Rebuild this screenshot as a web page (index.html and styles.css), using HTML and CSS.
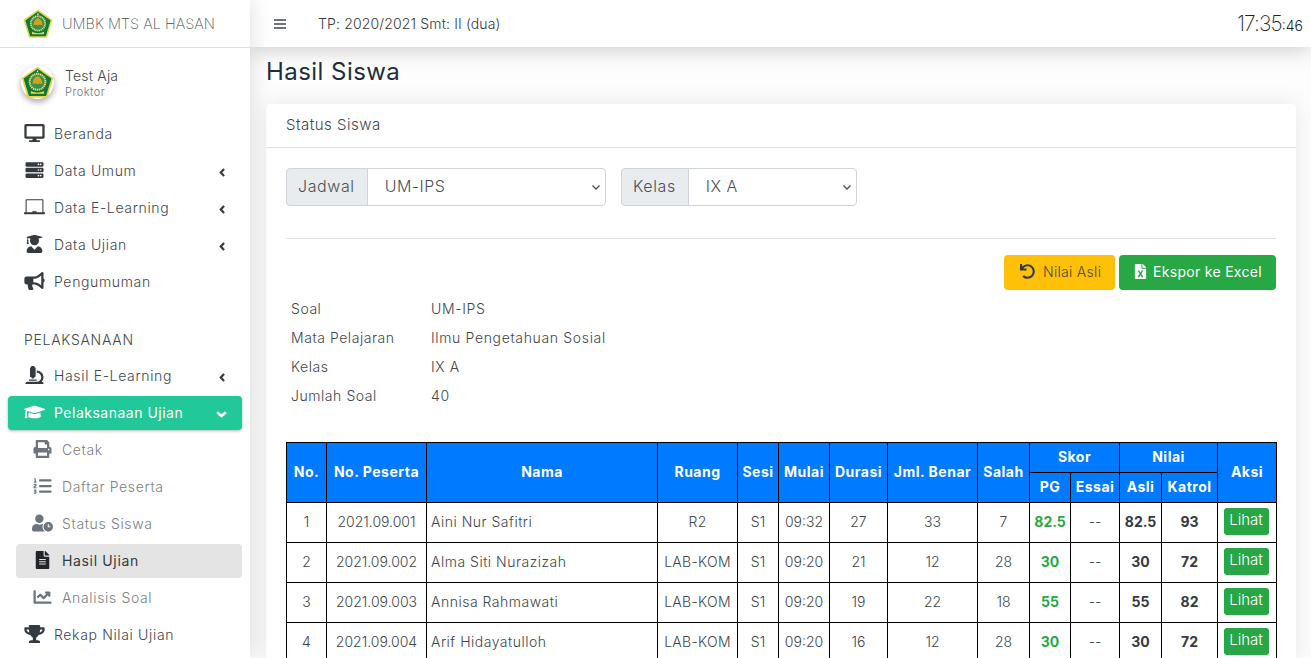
FILE: index.html
```html
<!DOCTYPE html>
<html lang="id">
<head>
<meta charset="utf-8">
<title>Hasil Siswa</title>
<link rel="stylesheet" href="styles.css">
</head>
<body>
<svg class="defs" width="0" height="0">
  <symbol id="logo" viewBox="0 0 100 100">
    <path d="M50 2 98 36 80 96H20L2 36Z" fill="#e8d44a"/>
    <path d="M50 8 92 38 76 91H24L8 38Z" fill="#0f7a35"/>
    <circle cx="50" cy="48" r="24" fill="#3d8f45" stroke="#e3dc8a" stroke-width="6" stroke-dasharray="4 2"/>
    <path d="M50 30c10 4 15 13 15 25-6-3-11-3-15 0-4-3-9-3-15 0 0-12 5-21 15-25Z" fill="#d1a21f"/>
    <path d="M30 76c12 6 28 6 40 0v8H30Z" fill="#e8d44a"/>
    <path d="M50 12l3 7h-6Z" fill="#fff"/>
  </symbol>
  <symbol id="i-desktop" viewBox="0 0 576 512"><path d="M528 0H48C21.500 0 0 21.500 0 48v320c0 26.500 21.500 48 48 48h192l-16 48h-72c-13.300 0-24 10.700-24 24s10.700 24 24 24h272c13.300 0 24-10.700 24-24s-10.700-24-24-24h-72l-16-48h192c26.500 0 48-21.500 48-48V48c0-26.500-21.500-48-48-48zm-16 352H64V64h448v288z"/></symbol>
  <symbol id="i-server" viewBox="0 0 512 512"><path d="M480 160H32c-17.673 0-32-14.327-32-32V64c0-17.673 14.327-32 32-32h448c17.673 0 32 14.327 32 32v64c0 17.673-14.327 32-32 32zm-48-88c-13.255 0-24 10.745-24 24s10.745 24 24 24 24-10.745 24-24-10.745-24-24-24zm-64 0c-13.255 0-24 10.745-24 24s10.745 24 24 24 24-10.745 24-24-10.745-24-24-24zm112 248H32c-17.673 0-32-14.327-32-32v-64c0-17.673 14.327-32 32-32h448c17.673 0 32 14.327 32 32v64c0 17.673-14.327 32-32 32zm-48-88c-13.255 0-24 10.745-24 24s10.745 24 24 24 24-10.745 24-24-10.745-24-24-24zm-64 0c-13.255 0-24 10.745-24 24s10.745 24 24 24 24-10.745 24-24-10.745-24-24-24zm112 248H32c-17.673 0-32-14.327-32-32v-64c0-17.673 14.327-32 32-32h448c17.673 0 32 14.327 32 32v64c0 17.673-14.327 32-32 32zm-48-88c-13.255 0-24 10.745-24 24s10.745 24 24 24 24-10.745 24-24-10.745-24-24-24zm-64 0c-13.255 0-24 10.745-24 24s10.745 24 24 24 24-10.745 24-24-10.745-24-24-24z"/></symbol>
  <symbol id="i-laptop" viewBox="0 0 640 512"><path fill-rule="evenodd" d="M80 16h480c18 0 32 14 32 32v368h48v32c0 18-14 32-32 32H32c-18 0-32-14-32-32v-32h48V48c0-18 14-32 32-32Zm0 32v368h176v-32h128v32h176V48Z"/></symbol>
  <symbol id="i-grad" viewBox="0 0 448 512"><path d="M319.400 320.600L224 416l-95.400-95.400C57.100 323.700 0 382.200 0 454.400v9.600c0 26.500 21.500 48 48 48h352c26.500 0 48-21.500 48-48v-9.600c0-72.200-57.100-130.700-128.600-133.800zM13.600 79.800l6.400 1.500v58.400c-7 4.200-12 11.500-12 20.300 0 8.400 4.600 15.400 11.100 19.700L3.500 242c-1.700 6.900 2.100 14 7.600 14h41.800c5.500 0 9.300-7.100 7.600-14l-15.600-62.300C51.400 175.400 56 168.400 56 160c0-8.800-5-16.100-12-20.300V87.100l66 15.900c-8.600 17.200-14 36.400-14 57 0 70.700 57.300 128 128 128s128-57.300 128-128c0-20.600-5.300-39.800-14-57l96.300-23.200c18.200-4.400 18.200-27.100 0-31.500l-190.400-46c-13-3.100-26.700-3.100-39.700 0L13.600 48.200c-18.100 4.400-18.100 27.200 0 31.600z"/></symbol>
  <symbol id="i-horn" viewBox="0 0 576 512"><path d="M576 240c0-23.630-12.950-44.040-32-55.120V32.010C544 23.260 537.020 0 512 0c-7.120 0-14.190 2.380-19.980 7.020l-85.030 68.030C364.280 109.190 310.660 128 256 128H64c-35.350 0-64 28.650-64 64v96c0 35.350 28.650 64 64 64h33.700c-1.390 10.480-2.180 21.140-2.180 32 0 39.770 9.260 77.350 25.560 110.940 5.190 10.690 16.520 17.060 28.400 17.060h74.280c26.050 0 41.690-29.840 25.900-50.560-16.400-21.520-26.150-48.360-26.150-77.440 0-11.110 1.620-21.790 4.410-32H256c54.660 0 108.280 18.810 150.980 52.950l85.030 68.030a32.023 32.023 0 0 0 19.980 7.020c24.920 0 32-22.780 32-32V295.130C563.050 284.040 576 263.630 576 240zm-96 141.420l-33.050-26.440C392.950 311.780 325.120 288 256 288v-96c69.120 0 136.950-23.780 190.950-66.980L480 98.580v282.840z"/></symbol>
  <symbol id="i-micro" viewBox="0 0 512 512"><path d="M160 320h12v16c0 8.840 7.160 16 16 16h40c8.840 0 16-7.160 16-16v-16h12c17.670 0 32-14.330 32-32V64c0-17.670-14.330-32-32-32V16c0-8.840-7.160-16-16-16h-64c-8.840 0-16 7.160-16 16v16c-17.670 0-32 14.330-32 32v224c0 17.670 14.330 32 32 32zm304 128h-1.290C493.240 413.990 512 369.650 512 320c0-105.880-86.120-192-192-192v64c70.580 0 128 57.420 128 128s-57.420 128-128 128H48c-26.510 0-48 21.490-48 48 0 8.840 7.160 16 16 16h480c8.840 0 16-7.160 16-16 0-26.510-21.490-48-48-48zm-360-32h208c4.420 0 8-3.580 8-8v-16c0-4.420-3.580-8-8-8H104c-4.420 0-8 3.580-8 8v16c0 4.420 3.580 8 8 8z"/></symbol>
  <symbol id="i-cap" viewBox="0 0 640 512"><path d="M622.340 153.200L343.400 67.500c-15.200-4.670-31.600-4.670-46.790 0L17.660 153.200c-23.540 7.230-23.540 38.360 0 45.590l48.630 14.940c-10.670 13.190-17.230 29.280-17.880 46.900C38.780 266.150 32 276.110 32 288c0 10.780 5.680 19.850 13.860 25.650L20.330 428.530C18.110 438.520 25.710 448 35.940 448h56.110c10.240 0 17.840-9.480 15.620-19.470L82.140 313.650C90.320 307.850 96 298.780 96 288c0-11.570-6.470-21.250-15.660-26.870.76-15.020 8.440-28.300 20.690-36.720L296.600 284.500c9.060 2.780 26.440 6.250 46.790 0l278.950-85.700c23.550-7.240 23.550-38.360 0-45.600zM352.790 315.090c-28.530 8.760-52.840 3.920-65.590 0l-145.020-44.550L128 384c0 35.350 85.960 64 192 64s192-28.650 192-64l-14.180-113.470-145.030 44.560z"/></symbol>
  <symbol id="i-print" viewBox="0 0 512 512"><path d="M448 192V77.250c0-8.490-3.370-16.620-9.370-22.630L393.370 9.370c-6-6-14.140-9.370-22.630-9.370H96C78.330 0 64 14.330 64 32v160c-35.350 0-64 28.650-64 64v112c0 8.840 7.160 16 16 16h48v96c0 17.670 14.330 32 32 32h320c17.670 0 32-14.330 32-32v-96h48c8.840 0 16-7.160 16-16V256c0-35.350-28.650-64-64-64zm-64 256H128v-96h256v96zm0-224H128V64h192v48c0 8.840 7.160 16 16 16h48v96zm48 72c-13.250 0-24-10.750-24-24 0-13.260 10.750-24 24-24s24 10.740 24 24c0 13.250-10.750 24-24 24z"/></symbol>
  <symbol id="i-list" viewBox="0 0 512 512"><path d="M61.770 401l17.500-20.150a19.920 19.920 0 0 0 5.070-14.190v-3.310C84.340 356 80.500 352 73 352H16a8 8 0 0 0-8 8v16a8 8 0 0 0 8 8h22.830a157.410 157.410 0 0 0-11 12.310l-5.610 7c-4 5.070-5.250 10.130-2.800 14.880l1.050 1.930c3 5.760 6.290 7.880 12.250 7.880h4.730c10.330 0 15.940 2.440 15.940 9.090 0 4.720-4.200 8.220-14.360 8.220a41.540 41.540 0 0 1-15.470-3.120c-6.490-3.880-11.740-3.500-15.600 3.120l-5.590 9.310c-3.720 6.130-3.190 11.720 2.630 15.940 7.710 4.690 20.380 9.440 37 9.440 34.160 0 48.500-22.750 48.500-44.120-.03-14.380-9.120-29.760-28.730-34.880zM496 224H176a16 16 0 0 0-16 16v32a16 16 0 0 0 16 16h320a16 16 0 0 0 16-16v-32a16 16 0 0 0-16-16zm0-160H176a16 16 0 0 0-16 16v32a16 16 0 0 0 16 16h320a16 16 0 0 0 16-16V80a16 16 0 0 0-16-16zm0 320H176a16 16 0 0 0-16 16v32a16 16 0 0 0 16 16h320a16 16 0 0 0 16-16v-32a16 16 0 0 0-16-16zM16 160h64a8 8 0 0 0 8-8v-16a8 8 0 0 0-8-8H64V40a8 8 0 0 0-8-8H32a8 8 0 0 0-7.140 4.420l-8 16A8 8 0 0 0 24 64h8v64H16a8 8 0 0 0-8 8v16a8 8 0 0 0 8 8zm-3.910 160H80a8 8 0 0 0 8-8v-16a8 8 0 0 0-8-8H41.320c3.290-10.290 48.340-18.680 48.340-56.440 0-29.060-25-39.560-44.470-39.560-21.360 0-33.800 10-40.460 18.750-4.370 5.590-3 10.840 2.800 15.370l8.580 6.880c5.610 4.560 11 2.470 16.120-2.440a13.440 13.440 0 0 1 9.460-3.840c3.330 0 9.280 1.560 9.280 8.750C51 248.190 0 257.310 0 304.590v4C0 316 5.080 320 12.090 320z"/></symbol>
  <symbol id="i-userclock" viewBox="0 0 640 512"><path d="M224 256A128 128 0 1 0 224 0a128 128 0 0 0 0 256zM320 368c0-27.800 6.700-54 18.500-77.100-3.100-.3-6.100-.9-9.300-.9h-16.700c-22.200 10.200-46.900 16-72.500 16s-50.200-5.800-72.500-16h-16.700C60.200 288 0 348.200 0 422.400V464c0 26.500 21.500 48 48 48h347.100c-45.300-31.900-75.100-84.500-75.100-144zM496 224c-79.590 0-144 64.410-144 144s64.410 144 144 144 144-64.410 144-144-64.410-144-144-144zm64 150.290c0 5.340-4.370 9.710-9.710 9.710h-60.570c-5.340 0-9.710-4.370-9.710-9.710v-76.570c0-5.340 4.370-9.710 9.710-9.710h12.570c5.340 0 9.710 4.370 9.710 9.710V352h38.290c5.340 0 9.710 4.370 9.710 9.710v12.580z"/></symbol>
  <symbol id="i-file" viewBox="0 0 384 512"><path d="M224 136V0H24C10.700 0 0 10.700 0 24v464c0 13.300 10.700 24 24 24h336c13.300 0 24-10.700 24-24V160H248c-13.200 0-24-10.800-24-24zm64 236c0 6.600-5.400 12-12 12H108c-6.600 0-12-5.400-12-12v-8c0-6.600 5.400-12 12-12h168c6.600 0 12 5.400 12 12v8zm0-64c0 6.600-5.400 12-12 12H108c-6.600 0-12-5.400-12-12v-8c0-6.600 5.400-12 12-12h168c6.600 0 12 5.400 12 12v8zm0-72v8c0 6.600-5.400 12-12 12H108c-6.600 0-12-5.400-12-12v-8c0-6.600 5.400-12 12-12h168c6.600 0 12 5.400 12 12zm96-114.100v6.100H256V0h6.100c6.400 0 12.500 2.500 17 7l97.900 98c4.500 4.500 7 10.600 7 16.900z"/></symbol>
  <symbol id="i-chart" viewBox="0 0 512 512"><path d="M496 384H64V80c0-8.840-7.160-16-16-16H16C7.160 64 0 71.160 0 80v336c0 17.670 14.330 32 32 32h464c8.840 0 16-7.160 16-16v-32c0-8.840-7.160-16-16-16zM464 96H345.940c-21.380 0-32.090 25.850-16.970 40.970l32.400 32.400L288 242.750l-73.370-73.370c-12.500-12.500-32.760-12.500-45.250 0l-68.690 68.690c-6.250 6.250-6.250 16.380 0 22.630l22.620 22.620c6.250 6.250 16.380 6.250 22.630 0L192 237.250l73.370 73.370c12.500 12.500 32.760 12.500 45.250 0l96-96 32.400 32.400c15.120 15.120 40.970 4.410 40.970-16.970V112c.01-8.840-7.150-16-15.990-16z"/></symbol>
  <symbol id="i-trophy" viewBox="0 0 576 512"><path d="M552 64H448V24c0-13.300-10.700-24-24-24H152c-13.300 0-24 10.700-24 24v40H24C10.700 64 0 74.700 0 88v56c0 35.700 22.500 72.400 61.900 100.700 31.500 22.700 69.800 37.100 110 41.700C203.300 338.500 240 360 240 360v72h-48c-35.300 0-64 20.700-64 56v12c0 6.600 5.400 12 12 12h296c6.600 0 12-5.400 12-12v-12c0-35.300-28.700-56-64-56h-48v-72s36.700-21.500 68.100-73.600c40.300-4.600 78.600-19 110-41.700 39.300-28.300 61.900-65 61.900-100.700V88c0-13.300-10.700-24-24-24zM99.300 192.800C74.900 175.200 64 155.600 64 144v-16h64.200c1 32.600 5.800 61.200 12.800 86.200-15.100-5.200-29.200-12.400-41.700-21.400zM512 144c0 16.100-17.700 36.100-35.300 48.800-12.500 9-26.700 16.200-41.800 21.400 7-25 11.800-53.600 12.800-86.200H512v16z"/></symbol>
  <symbol id="i-undo" viewBox="0 0 512 512"><path d="M212.333 224.333H12c-6.627 0-12-5.373-12-12V12C0 5.373 5.373 0 12 0h48c6.627 0 12 5.373 12 12v78.112C117.773 39.279 184.260 7.470 258.175 8.007c136.906.994 246.448 111.623 246.157 248.532C504.041 393.258 393.120 504 256.333 504c-64.089 0-122.496-24.313-166.510-64.215-5.099-4.622-5.334-12.554-.467-17.420l33.967-33.967c4.474-4.474 11.662-4.717 16.401-.525C170.760 415.336 211.580 432 256.333 432c97.268 0 176-78.716 176-176 0-97.267-78.716-176-176-176-58.496 0-110.280 28.476-142.274 72.333h98.274c6.627 0 12 5.373 12 12v48c0 6.627-5.373 12-12 12z"/></symbol>
  <symbol id="i-excel" viewBox="0 0 384 512"><path d="M224 136V0H24C10.700 0 0 10.700 0 24v464c0 13.300 10.700 24 24 24h336c13.300 0 24-10.700 24-24V160H248c-13.200 0-24-10.800-24-24zm60.100 106.500L224 336l60.100 93.500c5.100 8-.6 18.500-10.100 18.500h-34.900c-4.400 0-8.500-2.400-10.600-6.300C208.900 405.500 192 373 192 373c-6.400 14.800-10 20-36.600 68.800-2.100 3.900-6.100 6.300-10.500 6.300H110c-9.500 0-15.200-10.500-10.100-18.500l60.300-93.500-60.300-93.500c-5.200-8 .6-18.500 10.100-18.500h34.800c4.400 0 8.500 2.400 10.600 6.300 26.100 48.800 20 33.600 36.600 68.500 0 0 6.100-11.700 36.600-68.500 2.100-3.900 6.200-6.300 10.600-6.300H274c9.500-.1 15.200 10.400 10.100 18.400zM384 121.900v6.100H256V0h6.100c6.400 0 12.500 2.500 17 7l97.900 98c4.500 4.500 7 10.600 7 16.900z"/></symbol>
  <symbol id="i-left" viewBox="0 0 8 10"><path d="M5.800 1 2 5l3.800 4" fill="none" stroke="currentColor" stroke-width="2.500"/></symbol>
  <symbol id="i-down" viewBox="0 0 11 7"><path d="M1.200 1.200 5.500 5l4.300-3.800" fill="none" stroke="currentColor" stroke-width="2.500"/></symbol>
</svg>

<aside class="sidebar">
  <div class="brand">
    <svg class="brand-logo"><use href="#logo"/></svg>
    <span class="brand-text">UMBK MTS AL HASAN</span>
  </div>
  <div class="user">
    <span class="avatar"><svg class="avatar-logo"><use href="#logo"/></svg></span>
    <div class="user-info">
      <div class="user-name">Test Aja</div>
      <div class="user-role">Proktor</div>
    </div>
  </div>
  <nav class="menu">
    <a class="item"><svg class="ico"><use href="#i-desktop"/></svg>Beranda</a>
    <a class="item"><svg class="ico"><use href="#i-server"/></svg>Data Umum<svg class="arrow"><use href="#i-left"/></svg></a>
    <a class="item"><svg class="ico"><use href="#i-laptop"/></svg>Data E-Learning<svg class="arrow"><use href="#i-left"/></svg></a>
    <a class="item"><svg class="ico"><use href="#i-grad"/></svg>Data Ujian<svg class="arrow"><use href="#i-left"/></svg></a>
    <a class="item"><svg class="ico"><use href="#i-horn"/></svg>Pengumuman</a>
    <div class="menu-head">PELAKSANAAN</div>
    <a class="item"><svg class="ico"><use href="#i-micro"/></svg>Hasil E-Learning<svg class="arrow"><use href="#i-left"/></svg></a>
    <a class="item active"><svg class="ico"><use href="#i-cap"/></svg>Pelaksanaan Ujian<svg class="arrow-down"><use href="#i-down"/></svg></a>
    <a class="item sub"><svg class="ico"><use href="#i-print"/></svg>Cetak</a>
    <a class="item sub"><svg class="ico"><use href="#i-list"/></svg>Daftar Peserta</a>
    <a class="item sub"><svg class="ico"><use href="#i-userclock"/></svg>Status Siswa</a>
    <a class="item sub current"><svg class="ico"><use href="#i-file"/></svg>Hasil Ujian</a>
    <a class="item sub"><svg class="ico"><use href="#i-chart"/></svg>Analisis Soal</a>
    <a class="item"><svg class="ico"><use href="#i-trophy"/></svg>Rekap Nilai Ujian</a>
  </nav>
</aside>

<div class="page">
  <header class="topbar">
    <span class="bars"><i></i><i></i><i></i></span>
    <span class="period">TP: 2020/2021 Smt: II (dua)</span>
    <span class="clock">17:35<small>:46</small></span>
  </header>

  <main class="content">
    <h1 class="title">Hasil Siswa</h1>
    <section class="card">
      <div class="card-head">Status Siswa</div>
      <div class="card-body">
        <div class="filters">
          <div class="group group-jadwal">
            <span class="group-label">Jadwal</span>
            <select class="group-select"><option>UM-IPS</option></select>
          </div>
          <div class="group group-kelas">
            <span class="group-label">Kelas</span>
            <select class="group-select"><option>IX A</option></select>
          </div>
        </div>
        <hr class="rule">
        <div class="actions">
          <button class="btn btn-yellow"><svg class="btn-ico"><use href="#i-undo"/></svg>Nilai Asli</button>
          <button class="btn btn-green"><svg class="btn-ico"><use href="#i-excel"/></svg>Ekspor ke Excel</button>
        </div>
        <dl class="info">
          <dt>Soal</dt><dd>UM-IPS</dd>
          <dt>Mata Pelajaran</dt><dd>Ilmu Pengetahuan Sosial</dd>
          <dt>Kelas</dt><dd>IX A</dd>
          <dt>Jumlah Soal</dt><dd>40</dd>
        </dl>
        <table class="result">
          <colgroup>
            <col class="c-no"><col class="c-peserta"><col class="c-nama"><col class="c-ruang"><col class="c-sesi">
            <col class="c-mulai"><col class="c-durasi"><col class="c-benar"><col class="c-salah"><col class="c-pg">
            <col class="c-essai"><col class="c-asli"><col class="c-katrol"><col class="c-aksi">
          </colgroup>
          <thead>
            <tr>
              <th rowspan="2">No.</th><th rowspan="2">No. Peserta</th><th rowspan="2">Nama</th><th rowspan="2">Ruang</th>
              <th rowspan="2">Sesi</th><th rowspan="2">Mulai</th><th rowspan="2">Durasi</th><th rowspan="2">Jml. Benar</th>
              <th rowspan="2">Salah</th><th colspan="2">Skor</th><th colspan="2">Nilai</th><th rowspan="2">Aksi</th>
            </tr>
            <tr><th>PG</th><th>Essai</th><th>Asli</th><th>Katrol</th></tr>
          </thead>
          <tbody>
            <tr><td>1</td><td>2021.09.001</td><td class="name">Aini Nur Safitri</td><td class="room">R2</td><td>S1</td><td>09:32</td><td>27</td><td>33</td><td>7</td><td class="pg">82.5</td><td>--</td><td class="num">82.5</td><td class="num">93</td><td><button class="lihat">Lihat</button></td></tr>
            <tr><td>2</td><td>2021.09.002</td><td class="name">Alma Siti Nurazizah</td><td class="room">LAB-KOM</td><td>S1</td><td>09:20</td><td>21</td><td>12</td><td>28</td><td class="pg">30</td><td>--</td><td class="num">30</td><td class="num">72</td><td><button class="lihat">Lihat</button></td></tr>
            <tr><td>3</td><td>2021.09.003</td><td class="name">Annisa Rahmawati</td><td class="room">LAB-KOM</td><td>S1</td><td>09:20</td><td>19</td><td>22</td><td>18</td><td class="pg">55</td><td>--</td><td class="num">55</td><td class="num">82</td><td><button class="lihat">Lihat</button></td></tr>
            <tr><td>4</td><td>2021.09.004</td><td class="name">Arif Hidayatulloh</td><td class="room">LAB-KOM</td><td>S1</td><td>09:20</td><td>16</td><td>12</td><td>28</td><td class="pg">30</td><td>--</td><td class="num">30</td><td class="num">72</td><td><button class="lihat">Lihat</button></td></tr>
          </tbody>
        </table>
      </div>
    </section>
  </main>
</div>
</body>
</html>
```

FILE: styles.css
```css
* {
    box-sizing: border-box;
}

body {
    margin: 0;
    height: 658px;
    overflow: hidden;
    display: flex;
    background: #fdfdfd;
    font-family: Inter, "Liberation Sans", sans-serif;
    font-size: 14px;
    font-weight: 300;
    color: #41474d;
}

.defs {
    position: absolute;
}

/* sidebar */
.sidebar {
    width: 250px;
    flex: none;
    background: #fff;
    box-shadow: 0 0 22px rgba(0, 0, 0, .14);
    position: relative;
    z-index: 2;
}

.brand {
    height: 48px;
    display: flex;
    align-items: center;
    padding-left: 23px;
    border-bottom: 1px solid #dee2e6;
}

.brand-logo {
    width: 30px;
    height: 30px;
    margin-right: 9px;
}

.brand-text {
    font-size: 14.5px;
    font-weight: 200;
    color: #495057;
}

.user {
    height: 69px;
    display: flex;
    align-items: center;
    padding-left: 21px;
}

.avatar {
    width: 33px;
    height: 33px;
    border-radius: 50%;
    background: #fff;
    box-shadow: 0 3px 6px rgba(0, 0, 0, .35);
    margin-right: 11px;
    display: flex;
    align-items: center;
    justify-content: center;
}

.avatar-logo {
    width: 33px;
    height: 33px;
}

.user-info {
    padding-top: 2px;
}

.user-name {
    font-size: 14px;
    line-height: 16px;
    letter-spacing: .2px;
}

.user-role {
    margin-top: 2px;
    font-size: 11px;
    line-height: 13px;
    letter-spacing: .5px;
    color: #6c757d;
}

.menu {
    display: flex;
    flex-direction: column;
    gap: 3px;
    padding: 0 8px;
}

.item {
    height: 34px;
    display: flex;
    align-items: center;
    gap: 9px;
    padding: 0 16px 2px;
    border-radius: 4px;
    font-size: 14px;
    letter-spacing: .65px;
    color: #41474d;
}

.ico {
    width: 21px;
    height: 18px;
    flex: none;
    fill: #343a40;
}

.arrow {
    width: 7px;
    height: 9px;
    margin: 5px 0 0 auto;
    color: #343a40;
}

.arrow-down {
    width: 11px;
    height: 7px;
    margin: 4px -1px 0 auto;
    color: #fff;
}

.menu-head {
    height: 54px;
    padding: 28px 0 0 16px;
    font-size: 14px;
    line-height: 20px;
    letter-spacing: .7px;
}

.active {
    background: #20c997;
    color: #fff;
    font-weight: 400;
    letter-spacing: .5px;
    box-shadow: 0 1px 3px rgba(0, 0, 0, .3);
}

.active .ico {
    fill: #fff;
}

.sub {
    margin-left: 8px;
    color: #7a8188;
}

.sub .ico {
    fill: #6c757d;
}

.current {
    background: #e4e4e4;
    color: #343a40;
    font-weight: 400;
}

.current .ico {
    fill: #212529;
}

/* page */
.page {
    flex: 1;
    min-width: 0;
}

.topbar {
    height: 47px;
    display: flex;
    align-items: center;
    background: #fff;
    box-shadow: 0 4px 20px rgba(0, 0, 0, .18);
    position: relative;
    z-index: 1;
}

.bars {
    display: flex;
    flex-direction: column;
    gap: 2px;
    width: 12px;
    margin-left: 24px;
    margin-right: 32px;
}

.bars i {
    height: 2px;
    background: #6c757d;
}

.period {
    font-size: 14px;
    letter-spacing: .15px;
    color: #343a40;
}

.clock {
    margin-left: auto;
    margin-right: 8px;
    font-size: 21px;
    font-weight: 200;
    letter-spacing: -.9px;
    color: #212529;
}

.clock small {
    font-size: 14px;
    font-weight: 300;
    letter-spacing: 0;
}

.content {
    padding: 0 15px 0 16px;
}

.title {
    margin: 0;
    height: 57px;
    padding-top: 10px;
    font-size: 24px;
    line-height: 30px;
    font-weight: 400;
    letter-spacing: .45px;
    color: #1f2d3d;
}

.card {
    background: #fff;
    border-radius: 4px;
    box-shadow: 0 0 25px rgba(0, 0, 0, .09);
}

.card-head {
    height: 44px;
    padding: 0 20px 2px;
    display: flex;
    align-items: center;
    border-bottom: 1px solid #dee2e6;
    font-size: 15px;
    letter-spacing: .5px;
}

.card-body {
    padding: 20px 20px 0;
}

/* filters */
.filters {
    display: flex;
    gap: 15px;
}

.group {
    display: flex;
    height: 38px;
}

.group-jadwal {
    width: 320px;
}

.group-kelas {
    width: 236px;
}

.group-label {
    display: flex;
    align-items: center;
    padding: 0 12px 2px 11px;
    background: #e9ecef;
    border: 1px solid #ced4da;
    border-radius: 4px 0 0 4px;
    font-size: 16px;
    letter-spacing: .6px;
    color: #495057;
}

.group-select {
    flex: 1;
    min-width: 0;
    height: 38px;
    margin-left: -1px;
    padding: 0 12px 2px 17px;
    appearance: none;
    background: #fff url("data:image/svg+xml,%3Csvg xmlns='http://www.w3.org/2000/svg' width='8' height='5'%3E%3Cpath d='M.5.5 4 4 7.500.5' fill='none' stroke='%23495057' stroke-width='1.300'/%3E%3C/svg%3E") no-repeat right 5px center;
    border: 1px solid #ced4da;
    border-radius: 0 4px 4px 0;
    font-family: inherit;
    font-size: 16px;
    font-weight: 300;
    letter-spacing: .5px;
    color: #495057;
}

.rule {
    margin: 32px 0 16px;
    border: 0;
    border-top: 1px solid #dee2e6;
}

.actions {
    display: flex;
    justify-content: flex-end;
    gap: 4px;
}

.btn {
    height: 35px;
    display: flex;
    align-items: center;
    padding-bottom: 3px;
    border: 0;
    border-radius: 4px;
    font-family: inherit;
    font-size: 14px;
    font-weight: 300;
    letter-spacing: .3px;
}

.btn-ico {
    width: 15px;
    height: 15px;
    margin-right: 8px;
    fill: currentColor;
}

.btn-yellow {
    width: 111px;
    padding-left: 16px;
    background: #ffc107;
    color: #4d4a3a;
}

.btn-yellow .btn-ico {
    fill: #343a40;
}

.btn-green {
    width: 157px;
    padding-left: 14px;
    background: #28a745;
    color: #fff;
    font-weight: 400;
}

.btn-green .btn-ico {
    margin-right: 5px;
}

.info {
    display: grid;
    grid-template-columns: 140px 1fr;
    grid-auto-rows: 29px;
    align-items: center;
    margin: 4px 0 32px 5px;
    letter-spacing: .55px;
}

.info dt,
.info dd {
    margin: 0;
}

.info dd {
    letter-spacing: .65px;
}

/* table */
.result {
    width: 990px;
    table-layout: fixed;
    border-collapse: collapse;
}

.result th,
.result td {
    border: 1px solid #000;
    padding: 0 0 2px;
    text-align: center;
}

.result th {
    height: 30px;
    background: #007bff;
    color: #fff;
    font-weight: 700;
    font-size: 14px;
    letter-spacing: .5px;
}

.result td {
    height: 40px;
    font-size: 14px;
    letter-spacing: 0;
}

.result .room {
    letter-spacing: .3px;
}

.result .name {
    text-align: left;
    padding-left: 4px;
    letter-spacing: .5px;
}

.result .pg {
    font-weight: 700;
    color: #28a745;
}

.result .num {
    font-weight: 700;
    color: #343a40;
}

.c-no { width: 40px; }
.c-peserta { width: 100px; }
.c-nama { width: 231px; }
.c-ruang { width: 80px; }
.c-sesi { width: 41px; }
.c-mulai { width: 51px; }
.c-durasi { width: 58px; }
.c-benar { width: 90px; }
.c-salah { width: 52px; }
.c-pg { width: 41px; }
.c-essai { width: 49px; }
.c-asli { width: 42px; }
.c-katrol { width: 56px; }
.c-aksi { width: 59px; }

.lihat {
    width: 45px;
    height: 27px;
    margin: 0 2px 1px 0;
    padding: 0 0 4px;
    border: 0;
    border-radius: 3px;
    background: #28a745;
    color: #fff;
    font-family: inherit;
    font-size: 15px;
    font-weight: 300;
    vertical-align: middle;
}
```
